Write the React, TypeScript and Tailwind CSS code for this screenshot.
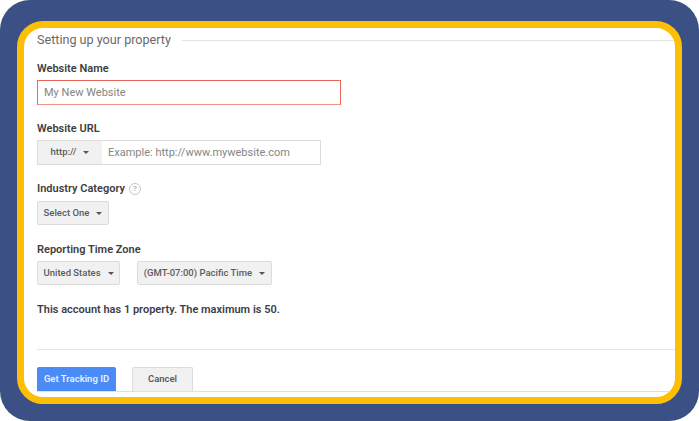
function Caret() {
  return <span className="ml-[7px] h-0 w-0 border-x-[3px] border-t-[3px] border-x-transparent border-t-[#555555]" />;
}

function SelectButton({ label, className }: { label: string; className: string }) {
  return (
    <div
      className={`flex h-[24px] shrink-0 items-center justify-center rounded-[2px] border border-[#dcdcdc] bg-[#f1f1f1] text-[9.5px] font-medium text-[#5c5c5c] ${className}`}
    >
      {label}
      <Caret />
    </div>
  );
}

function Label({ children }: { children: React.ReactNode }) {
  return <div className="h-[14px] shrink-0 text-[11px] leading-[16px] font-semibold text-[#404040]">{children}</div>;
}

export default function App() {
  return (
    <div className="h-[421px] w-[699px] bg-white font-['Roboto',sans-serif]">
      {/* Fond bleu */}
      <div className="h-full w-full rounded-[30px] bg-[#3b5185] px-[17px] pt-[21px] pb-[17px]">
        {/* Cadre jaune */}
        <div className="h-[383px] overflow-hidden rounded-[26px] border-[7px] border-[#fdbf05] bg-white">
          <div className="flex h-full flex-col pt-[5px] pl-[13px]">
            {/* Titre */}
            <div className="flex h-[14px] shrink-0 items-center">
              <span className="text-[12.6px] leading-[14px] text-[#6a6a6a]">Setting up your property</span>
              <div className="ml-[11px] h-px flex-1 bg-[#e4e4e4]" />
            </div>

            <div className="mt-[14px]">
              <Label>Website Name</Label>
            </div>
            <div className="mt-[5px] flex h-[25px] w-[304px] shrink-0 items-center border border-[#e8675a] border-b-[#f0918a] pt-px pl-[6px] text-[11px] text-[#858585]">
              My New Website
            </div>

            <div className="mt-[16px]">
              <Label>Website URL</Label>
            </div>
            <div className="mt-[5px] flex h-[25px] w-[284px] shrink-0 border border-[#dcdcdc]">
              <div className="flex w-[64px] items-center justify-center bg-[#f1f1f1] text-[9.5px] font-medium text-[#5c5c5c]">
                http://
                <Caret />
              </div>
              <div className="flex flex-1 items-center pt-px pl-[6px] text-[11px] text-[#858585]">
                Example: http://www.mywebsite.com
              </div>
            </div>

            <div className="mt-[16px] flex shrink-0 items-center">
              <Label>Industry Category</Label>
              <span className="mt-px ml-[4px] flex h-[12px] w-[12px] items-center justify-center rounded-full border border-[#c8c8c8] text-[8px] text-[#9a9a9a]">
                ?
              </span>
            </div>
            <div className="mt-[6px]">
              <SelectButton label="Select One" className="w-[72px]" />
            </div>

            <div className="mt-[17px]">
              <Label>Reporting Time Zone</Label>
            </div>
            <div className="mt-[5px] flex shrink-0 gap-[17px]">
              <SelectButton label="United States" className="w-[83px]" />
              <SelectButton label="(GMT-07:00) Pacific Time" className="w-[135px]" />
            </div>

            <div className="mt-[17px] h-[14px] shrink-0 text-[11px] leading-[16px] font-semibold text-[#3d3d4a]">
              This account has 1 property. The maximum is 50.
            </div>

            <div className="mt-[33px] h-px shrink-0 bg-[#e4e4e4]" />

            {/* Boutons */}
            <div className="mt-[17px] flex shrink-0 gap-[16px]">
              <div className="flex h-[24px] w-[79px] items-center justify-center rounded-t-[2px] bg-[#4a8bf5] text-[9.5px] font-semibold text-[#e8f0fe]">
                Get Tracking ID
              </div>
              <div className="flex h-[24px] w-[61px] items-center justify-center rounded-t-[2px] border border-b-0 border-[#dcdcdc] bg-[#f1f1f1] text-[9.5px] font-semibold text-[#5c5c5c]">
                Cancel
              </div>
            </div>
            <div className="h-px shrink-0 bg-[#e0e0e0]" />
          </div>
        </div>
      </div>
    </div>
  );
}
